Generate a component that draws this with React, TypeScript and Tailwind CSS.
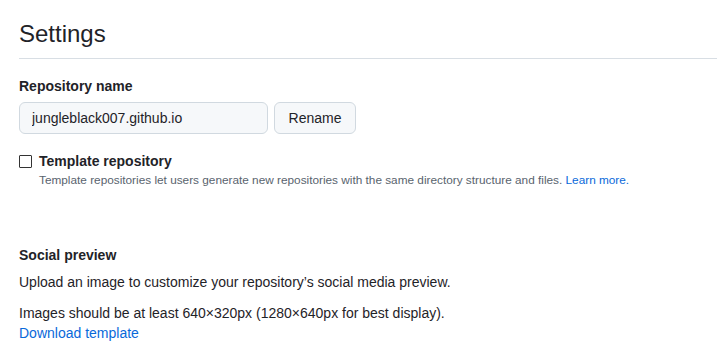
import React from 'react';

// Repository settings: general section (name, template flag, social preview)

const App: React.FC = () => {
  return (
    <div className="min-h-[350px] bg-white pl-[19px] text-[#1f2328] font-['Liberation_Sans',sans-serif]">
      <div className="pt-[19px] pb-[9px] border-b border-[#d8dee4]">
        <h1 className="text-[24px] leading-[30px] font-normal">Settings</h1>
      </div>

      <div className="mt-[17px]">
        <label className="block text-[14px] font-semibold leading-[20px]">Repository name</label>
        <div className="mt-[6px] flex gap-[6px]">
          <input
            readOnly
            value="jungleblack007.github.io"
            className="w-[249px] h-[32px] px-[12px] text-[14px] rounded-[6px] border border-[#d1d9e0] bg-[#f6f8fa] outline-none"
          />
          <button className="h-[32px] w-[82px] text-[14px] rounded-[6px] border border-[#d1d9e0] bg-[#f6f8fa]">
            Rename
          </button>
        </div>
      </div>

      <div className="mt-[17px]">
        <div className="flex items-center gap-[7px]">
          <span className="w-[13px] h-[13px] border border-[#333] rounded-[1px] bg-white" />
          <span className="text-[14px] font-semibold leading-[20px]">Template repository</span>
        </div>
        <p className="ml-[20px] text-[11.8px] leading-[18px] text-[#59636e]">
          Template repositories let users generate new repositories with the same directory structure and files.{' '}
          <a className="text-[#0969da]">Learn more.</a>
        </p>
      </div>

      <div className="mt-[56px]">
        <h2 className="text-[14px] font-semibold leading-[20px]">Social preview</h2>
        <p className="mt-[7px] text-[14px] leading-[20px]">Upload an image to customize your repository’s social media preview.</p>
        <p className="mt-[11px] text-[14px] leading-[20px]">Images should be at least 640×320px (1280×640px for best display).</p>
        <a className="block text-[14px] leading-[20px] text-[#0969da]">Download template</a>
      </div>
    </div>
  );
};

export default App;
